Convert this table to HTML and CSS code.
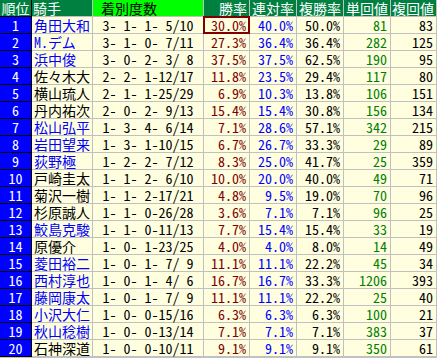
FILE: index.html
```html
<!DOCTYPE html>
<html lang="ja">
<head>
<meta charset="utf-8">
<title>騎手成績</title>
<link rel="stylesheet" href="styles.css">
</head>
<body>
<div class="grid">
  <div class="h rank">順位</div><div class="h name">騎手</div><div class="h rec">着別度数</div><div class="h num">勝率</div><div class="h num">連対率</div><div class="h num">複勝率</div><div class="h num">単回値</div><div class="h num">複回値</div>

  <div class="rank">1</div><div class="name blue">角田大和</div><div class="rec">3- 1- 1- 5/10</div><div class="num win hl">30.0%</div><div class="num ren">40.0%</div><div class="num fuku">50.0%</div><div class="num tan">81</div><div class="num fk">83</div>
  <div class="rank">2</div><div class="name blue">Ｍ．デム</div><div class="rec">3- 1- 0- 7/11</div><div class="num win">27.3%</div><div class="num ren">36.4%</div><div class="num fuku">36.4%</div><div class="num tan">282</div><div class="num fk">125</div>
  <div class="rank">3</div><div class="name blue">浜中俊</div><div class="rec">3- 0- 2- 3/ 8</div><div class="num win">37.5%</div><div class="num ren">37.5%</div><div class="num fuku">62.5%</div><div class="num tan">190</div><div class="num fk">95</div>
  <div class="rank">4</div><div class="name">佐々木大</div><div class="rec">2- 2- 1-12/17</div><div class="num win">11.8%</div><div class="num ren">23.5%</div><div class="num fuku">29.4%</div><div class="num tan">117</div><div class="num fk">80</div>
  <div class="rank">5</div><div class="name">横山琉人</div><div class="rec">2- 1- 1-25/29</div><div class="num win">6.9%</div><div class="num ren">10.3%</div><div class="num fuku">13.8%</div><div class="num tan">106</div><div class="num fk">151</div>
  <div class="rank">6</div><div class="name">丹内祐次</div><div class="rec">2- 0- 2- 9/13</div><div class="num win">15.4%</div><div class="num ren">15.4%</div><div class="num fuku">30.8%</div><div class="num tan">156</div><div class="num fk">134</div>
  <div class="rank">7</div><div class="name blue">松山弘平</div><div class="rec">1- 3- 4- 6/14</div><div class="num win">7.1%</div><div class="num ren">28.6%</div><div class="num fuku">57.1%</div><div class="num tan">342</div><div class="num fk">215</div>
  <div class="rank">8</div><div class="name blue">岩田望来</div><div class="rec">1- 3- 1-10/15</div><div class="num win">6.7%</div><div class="num ren">26.7%</div><div class="num fuku">33.3%</div><div class="num tan">29</div><div class="num fk">89</div>
  <div class="rank">9</div><div class="name blue">荻野極</div><div class="rec">1- 2- 2- 7/12</div><div class="num win">8.3%</div><div class="num ren">25.0%</div><div class="num fuku">41.7%</div><div class="num tan">25</div><div class="num fk">359</div>
  <div class="rank">10</div><div class="name">戸崎圭太</div><div class="rec">1- 1- 2- 6/10</div><div class="num win">10.0%</div><div class="num ren">20.0%</div><div class="num fuku">40.0%</div><div class="num tan">49</div><div class="num fk">71</div>
  <div class="rank">11</div><div class="name">菊沢一樹</div><div class="rec">1- 1- 2-17/21</div><div class="num win">4.8%</div><div class="num ren">9.5%</div><div class="num fuku">19.0%</div><div class="num tan">70</div><div class="num fk">96</div>
  <div class="rank">12</div><div class="name">杉原誠人</div><div class="rec">1- 1- 0-26/28</div><div class="num win">3.6%</div><div class="num ren">7.1%</div><div class="num fuku">7.1%</div><div class="num tan">96</div><div class="num fk">25</div>
  <div class="rank">13</div><div class="name blue">鮫島克駿</div><div class="rec">1- 1- 0-11/13</div><div class="num win">7.7%</div><div class="num ren">15.4%</div><div class="num fuku">15.4%</div><div class="num tan">33</div><div class="num fk">19</div>
  <div class="rank">14</div><div class="name">原優介</div><div class="rec">1- 0- 1-23/25</div><div class="num win">4.0%</div><div class="num ren">4.0%</div><div class="num fuku">8.0%</div><div class="num tan">14</div><div class="num fk">49</div>
  <div class="rank">15</div><div class="name blue">菱田裕二</div><div class="rec">1- 0- 1- 7/ 9</div><div class="num win">11.1%</div><div class="num ren">11.1%</div><div class="num fuku">22.2%</div><div class="num tan">45</div><div class="num fk">34</div>
  <div class="rank">16</div><div class="name blue">西村淳也</div><div class="rec">1- 0- 1- 4/ 6</div><div class="num win">16.7%</div><div class="num ren">16.7%</div><div class="num fuku">33.3%</div><div class="num tan">1206</div><div class="num fk">393</div>
  <div class="rank">17</div><div class="name blue">藤岡康太</div><div class="rec">1- 0- 1- 7/ 9</div><div class="num win">11.1%</div><div class="num ren">11.1%</div><div class="num fuku">22.2%</div><div class="num tan">25</div><div class="num fk">40</div>
  <div class="rank">18</div><div class="name blue">小沢大仁</div><div class="rec">1- 0- 0-15/16</div><div class="num win">6.3%</div><div class="num ren">6.3%</div><div class="num fuku">6.3%</div><div class="num tan">100</div><div class="num fk">21</div>
  <div class="rank">19</div><div class="name blue">秋山稔樹</div><div class="rec">1- 0- 0-13/14</div><div class="num win">7.1%</div><div class="num ren">7.1%</div><div class="num fuku">7.1%</div><div class="num tan">383</div><div class="num fk">37</div>
  <div class="rank">20</div><div class="name">石神深道</div><div class="rec">1- 0- 0-10/11</div><div class="num win">9.1%</div><div class="num ren">9.1%</div><div class="num fuku">9.1%</div><div class="num tan">350</div><div class="num fk">61</div>
</div>
</body>
</html>
```

FILE: styles.css
```css
html, body {
  margin: 0;
  padding: 0;
  background: #c0c0c0;
}

.grid {
  display: grid;
  grid-template-columns: 31px 60px 110px 45px 46px 46px 46px 45px;
  grid-auto-rows: 16px;
  gap: 1px;
  width: 436px;
  padding: 0 1px 2px 0;
  background: #c0c0c0;
  font-family: "Noto Sans CJK JP", sans-serif;
  font-size: 14px;
  line-height: 16px;
  font-feature-settings: "hwid" 1;
  color: #000;
}

.grid > div {
  background: #ffffe0;
  white-space: pre;
}

.grid > .h {
  background: #008040;
  color: #fff;
}

.grid > .h.rec {
  background: #00ff00;
  color: #000;
  padding-left: 8px;
  text-align: left;
}

.grid > .rank {
  background: #0000ff;
  color: #fff;
  text-align: center;
  box-shadow: 0 0 0 1px #000;
}

.grid > .h.rank {
  background: #008040;
}

.name {
  padding-left: 2px;
}

.h.name {
  padding-left: 1px;
}

.name.blue {
  color: #0000ff;
}

.rec {
  text-align: center;
}

.num {
  text-align: right;
  padding-right: 3px;
}

.h.num {
  padding-right: 2px;
}

.win { color: #800000; }
.ren { color: #0000ff; }
.fuku { color: #000; }
.tan { color: #008000; }
.fk { color: #000; }

.hl {
  outline: 1px solid #800000;
  box-shadow: inset 0 0 0 1px #800000;
}
```
